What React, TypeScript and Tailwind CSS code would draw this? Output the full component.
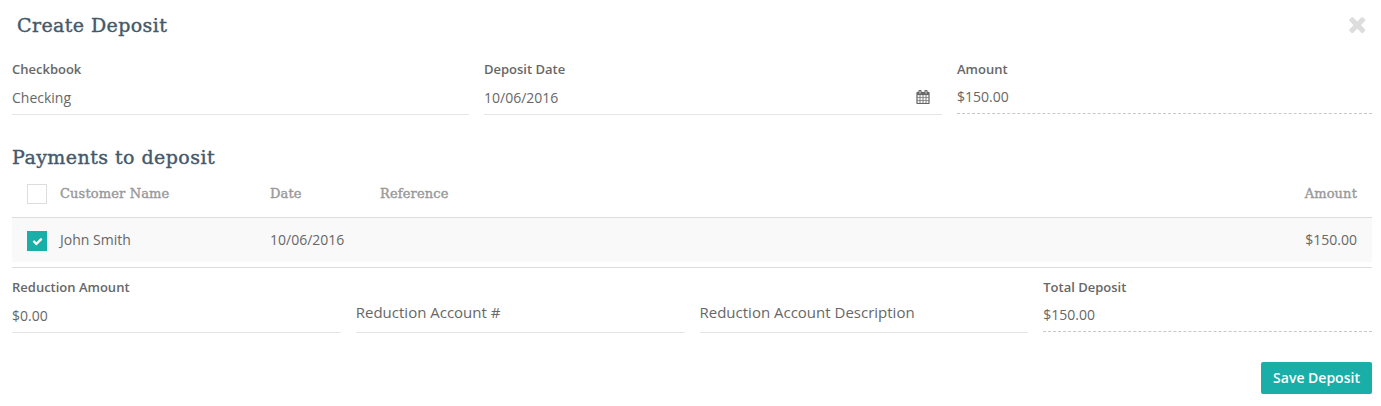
import React, { type FC } from 'react';

// --- Icons ---
interface IconProps {
    className?: string;
}

const TimesIcon: FC<IconProps> = ({ className }) => (
    <svg viewBox="0 0 1792 1792" fill="currentColor" className={className}>
        <path d="M1490 1322q0 40-28 68l-136 136q-28 28-68 28t-68-28l-294-294-294 294q-28 28-68 28t-68-28l-136-136q-28-28-28-68t28-68l294-294-294-294q-28-28-28-68t28-68l136-136q28-28 68-28t68 28l294 294 294-294q28-28 68-28t68 28l136 136q28 28 28 68t-28 68l-294 294 294 294q28 28 28 68z" />
    </svg>
);

const CalendarIcon: FC<IconProps> = ({ className }) => (
    <svg viewBox="0 0 1792 1792" fill="currentColor" stroke="currentColor" strokeWidth="30" className={className}>
        <path d="M192 1664h288v-288h-288v288zm352 0h320v-288h-320v288zm-352-352h288v-320h-288v320zm352 0h320v-320h-320v320zm-352-384h288v-288h-288v288zm736 736h320v-288h-320v288zm-384-736h320v-288h-320v288zm768 736h288v-288h-288v288zm-384-352h320v-320h-320v320zm-352-864v-288q0-13-9.500-22.500t-22.500-9.500h-64q-13 0-22.500 9.500t-9.500 22.500v288q0 13 9.500 22.500t22.500 9.500h64q13 0 22.500-9.500t9.500-22.500zm736 864h288v-320h-288v320zm-384-384h320v-288h-320v288zm384 0h288v-288h-288v288zm32-480v-288q0-13-9.500-22.500t-22.500-9.500h-64q-13 0-22.500 9.500t-9.500 22.500v288q0 13 9.500 22.500t22.500 9.500h64q13 0 22.500-9.500t9.500-22.500zm384-64v1280q0 52-38 90t-90 38h-1408q-52 0-90-38t-38-90v-1280q0-52 38-90t90-38h128v-96q0-66 47-113t113-47h64q66 0 113 47t47 113v96h384v-96q0-66 47-113t113-47h64q66 0 113 47t47 113v96h128q52 0 90 38t38 90z" />
    </svg>
);

const CheckIcon: FC<IconProps> = ({ className }) => (
    <svg viewBox="0 0 1792 1792" fill="currentColor" className={className}>
        <path d="M1671 566q0 40-28 68l-724 724-136 136q-28 28-68 28t-68-28l-136-136-362-362q-28-28-28-68t28-68l136-136q28-28 68-28t68 28l294 295 656-657q28-28 68-28t68 28l136 136q28 28 28 68z" />
    </svg>
);

// --- Form field with an underline ---
interface FieldProps {
    label: string;
    value: string;
    readOnly?: boolean;
    icon?: React.ReactNode;
}

const Field: FC<FieldProps> = ({ label, value, readOnly, icon }) => (
    <div>
        <div className="h-5 text-[13px] leading-[18px] font-semibold">{label}</div>
        <div
            className={
                readOnly
                    ? 'flex h-[34px] items-center justify-between border-b border-dashed border-[#c8c8c8]'
                    : 'flex h-[35px] items-center justify-between border-b border-[#e5e5e5] pt-px'
            }
        >
            <span>{value}</span>
            {icon}
        </div>
    </div>
);

// Empty field, its placeholder stands in for the label
const EmptyField: FC<{ placeholder: string }> = ({ placeholder }) => (
    <div className="flex h-[55px] items-end border-b border-[#e5e5e5] pb-[9px] text-[15px] leading-[22px]">
        {placeholder}
    </div>
);

const Checkbox: FC<{ checked?: boolean }> = ({ checked }) => (
    <span
        role="checkbox"
        aria-checked={!!checked}
        className={
            checked
                ? 'flex size-5 items-center justify-center bg-[#1aaea8] text-white'
                : 'flex size-5 items-center justify-center border border-[#dddddd] bg-white'
        }
    >
        {checked && <CheckIcon className="size-[11px]" />}
    </span>
);

const payments = [{ customer: 'John Smith', date: '10/06/2016', reference: '', amount: '$150.00' }];

export default function App() {
    return (
        <main className="h-[406px] bg-white pr-[9px] pl-3 font-['Open_Sans',sans-serif] text-sm leading-5 text-[#676767]">
            <header className="flex h-[60px] items-start justify-between pt-3 pr-[2.5px] pl-[5px]">
                <h2 className="font-['DejaVu_Serif',serif] text-[19px] leading-[26px] tracking-[0.4px] text-[#44596b] [-webkit-text-stroke:0.4px]">
                    Create Deposit
                </h2>
                <button type="button" aria-label="Close" className="text-[#dddddd]">
                    <TimesIcon className="size-[24.5px]" />
                </button>
            </header>

            <section className="grid grid-cols-[457px_458px_1fr] gap-[15px]">
                <Field label="Checkbook" value="Checking" />
                <Field
                    label="Deposit Date"
                    value="10/06/2016"
                    icon={<CalendarIcon className="mr-3 mb-0.5 size-3.5" />}
                />
                <Field label="Amount" value="$150.00" readOnly />
            </section>

            <section className="pt-[29px]">
                <h3 className="h-[30px] font-['DejaVu_Serif',serif] text-[19px] leading-[26px] tracking-[0.45px] text-[#44596b] [-webkit-text-stroke:0.4px]">
                    Payments to deposit
                </h3>
                <div className="border-b border-[#dddddd]">
                    <div className="grid h-[44px] grid-cols-[33px_210px_110px_1fr_auto] border-b border-[#dddddd] px-[15px] pt-[10px] font-['DejaVu_Serif',serif] text-[13px] tracking-[0.14px] text-[#999999] [-webkit-text-stroke:0.4px]">
                        <Checkbox />
                        <span>Customer Name</span>
                        <span>Date</span>
                        <span>Reference</span>
                        <span>Amount</span>
                    </div>
                    {payments.map((payment) => (
                        <div
                            key={payment.customer}
                            className="mb-[5px] grid h-[44px] grid-cols-[33px_210px_110px_1fr_auto] bg-[#f9f9f9] px-[15px] pt-3"
                        >
                            <div className="pt-px">
                                <Checkbox checked />
                            </div>
                            <span>{payment.customer}</span>
                            <span>{payment.date}</span>
                            <span>{payment.reference}</span>
                            <span>{payment.amount}</span>
                        </div>
                    ))}
                </div>
            </section>

            <section className="grid grid-cols-4 gap-[15px] pt-2.5">
                <Field label="Reduction Amount" value="$0.00" />
                <EmptyField placeholder="Reduction Account #" />
                <EmptyField placeholder="Reduction Account Description" />
                <Field label="Total Deposit" value="$150.00" readOnly />
            </section>

            <footer className="flex justify-end pt-[29px]">
                <button
                    type="button"
                    className="h-8 w-[111px] rounded-xs bg-[#1aaea8] text-sm font-semibold text-white"
                >
                    Save Deposit
                </button>
            </footer>
        </main>
    );
}
